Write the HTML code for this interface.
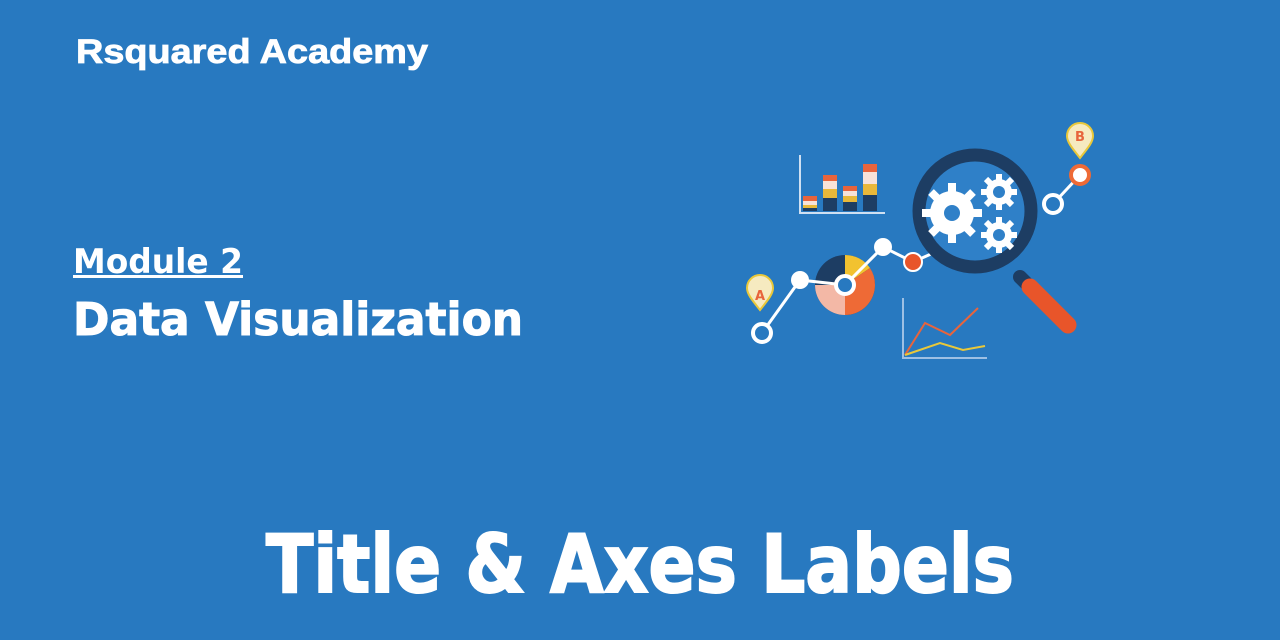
<!DOCTYPE html>
<html><head><meta charset="utf-8"><style>
html,body{margin:0;padding:0;background:#2879c0;width:1280px;height:640px;overflow:hidden}
svg{display:block}
text{font-family:"DejaVu Sans","Liberation Sans",sans-serif;font-weight:bold;fill:#fff}
</style></head><body>
<svg width="1280" height="640" viewBox="0 0 1280 640" xmlns="http://www.w3.org/2000/svg">
<rect width="1280" height="640" fill="#2879c0"/>
<text x="76" y="63" font-size="34" textLength="352" lengthAdjust="spacingAndGlyphs" style="font-family:'Liberation Sans',sans-serif;stroke:#fff;stroke-width:0.8">Rsquared Academy</text>
<text x="73" y="273" font-size="34" textLength="170" lengthAdjust="spacingAndGlyphs">Module 2</text>
<rect x="73" y="275" width="170" height="3" fill="#fff"/>
<text x="73" y="335" font-size="45" textLength="450" lengthAdjust="spacingAndGlyphs" style="stroke:#fff;stroke-width:1">Data Visualization</text>
<text x="266" y="592" font-size="80" textLength="748" lengthAdjust="spacingAndGlyphs" style="stroke:#fff;stroke-width:2">Title &amp; Axes Labels</text>

<!-- bar chart -->
<g>
<path d="M800 155V213H885" stroke="#cfe0f2" stroke-width="2" fill="none"/>
<rect x="803" y="196" width="14" height="15" fill="#1d3d63"/><rect x="803" y="196" width="14" height="5" fill="#e8643c"/><rect x="803" y="201" width="14" height="4" fill="#f7e2d8"/><rect x="803" y="205" width="14" height="3" fill="#e9b83a"/>
<rect x="823" y="175" width="14" height="36" fill="#1d3d63"/><rect x="823" y="175" width="14" height="6" fill="#e8643c"/><rect x="823" y="181" width="14" height="8" fill="#f7e2d8"/><rect x="823" y="189" width="14" height="9" fill="#e9b83a"/>
<rect x="843" y="186" width="14" height="25" fill="#1d3d63"/><rect x="843" y="186" width="14" height="5" fill="#e8643c"/><rect x="843" y="191" width="14" height="5" fill="#f7e2d8"/><rect x="843" y="196" width="14" height="6" fill="#e9b83a"/>
<rect x="863" y="164" width="14" height="47" fill="#1d3d63"/><rect x="863" y="164" width="14" height="8" fill="#e8643c"/><rect x="863" y="172" width="14" height="12" fill="#f7e2d8"/><rect x="863" y="184" width="14" height="11" fill="#e9b83a"/>
</g>
<!-- line chart -->
<path d="M903 298V358H987" stroke="#9dc0e4" stroke-width="2" fill="none"/>
<polyline points="905,355 925,323 950,335 978,308" stroke="#e8643c" stroke-width="2" fill="none"/>
<polyline points="905,355 940,343 963,350 985,346" stroke="#e9c83a" stroke-width="2" fill="none"/>
<!-- pie -->
<circle cx="845" cy="285" r="30" fill="#1d3d63"/>
<path d="M845 285V255A30 30 0 0 1 870 268Z" fill="#f2c230"/>
<path d="M845 285L875 285A30 30 0 0 1 845 315Z" fill="#ee6a36"/>
<path d="M845 285L875 285A30 30 0 0 0 870 268Z" fill="#ee6a36"/>
<path d="M845 285V315A30 30 0 0 1 815 285Z" fill="#f3b8a6"/>
<!-- line path -->
<polyline points="762,333 800,280 845,285 883,247 913,262 940,250" stroke="#fff" stroke-width="3" fill="none"/>
<polyline points="1053,204 1080,175" stroke="#fff" stroke-width="3" fill="none"/>
<circle cx="762" cy="333" r="9" fill="#2879c0" stroke="#fff" stroke-width="4"/>
<circle cx="800" cy="280" r="9" fill="#fff"/>
<circle cx="845" cy="285" r="9" fill="#2879c0" stroke="#fff" stroke-width="4"/>
<circle cx="883" cy="247" r="9" fill="#fff"/>
<circle cx="913" cy="262" r="9" fill="#e8552a" stroke="#fff" stroke-width="2"/>
<circle cx="1053" cy="204" r="9" fill="#2879c0" stroke="#fff" stroke-width="4"/>
<circle cx="1080" cy="175" r="9" fill="#fff" stroke="#ee6a36" stroke-width="4"/>
<!-- pins -->
<path d="M760 310C752 300 747 294 747 288A13 13 0 0 1 773 288C773 294 768 300 760 310Z" fill="#f6eac0" stroke="#e9c83a" stroke-width="2"/>
<text x="760" y="300" font-size="13" text-anchor="middle" style="fill:#e8643c">A</text>
<path d="M1080 158C1072 148 1067 142 1067 136A13 13 0 0 1 1093 136C1093 142 1088 148 1080 158Z" fill="#f6eac0" stroke="#e9c83a" stroke-width="2"/>
<text x="1080" y="141" font-size="13" text-anchor="middle" style="fill:#e8643c">B</text>
<!-- magnifier -->
<line x1="1020" y1="277" x2="1068" y2="325" stroke="#1d3d63" stroke-width="14" stroke-linecap="round"/>
<line x1="1030" y1="287" x2="1068" y2="325" stroke="#e8552a" stroke-width="17" stroke-linecap="round"/>
<circle cx="975" cy="211" r="56" fill="#2f80c8" stroke="#1d3d63" stroke-width="13"/>
<g fill="#fff">
<circle cx="952" cy="213" r="22"/>
<g stroke="#fff" stroke-width="8">
<line x1="952" y1="183" x2="952" y2="243"/><line x1="922" y1="213" x2="982" y2="213"/>
<line x1="931" y1="192" x2="973" y2="234"/><line x1="931" y1="234" x2="973" y2="192"/>
</g>
<circle cx="999" cy="192" r="13"/>
<g stroke="#fff" stroke-width="6"><line x1="999" y1="174" x2="999" y2="210"/><line x1="981" y1="192" x2="1017" y2="192"/><line x1="986" y1="179" x2="1012" y2="205"/><line x1="986" y1="205" x2="1012" y2="179"/></g>
<circle cx="999" cy="235" r="13"/>
<g stroke="#fff" stroke-width="6"><line x1="999" y1="217" x2="999" y2="253"/><line x1="981" y1="235" x2="1017" y2="235"/><line x1="986" y1="222" x2="1012" y2="248"/><line x1="986" y1="248" x2="1012" y2="222"/></g>
</g>
<circle cx="952" cy="213" r="8" fill="#2f80c8"/>
<circle cx="999" cy="192" r="6" fill="#2f80c8"/>
<circle cx="999" cy="235" r="6" fill="#2f80c8"/>
</svg>
</body></html>
